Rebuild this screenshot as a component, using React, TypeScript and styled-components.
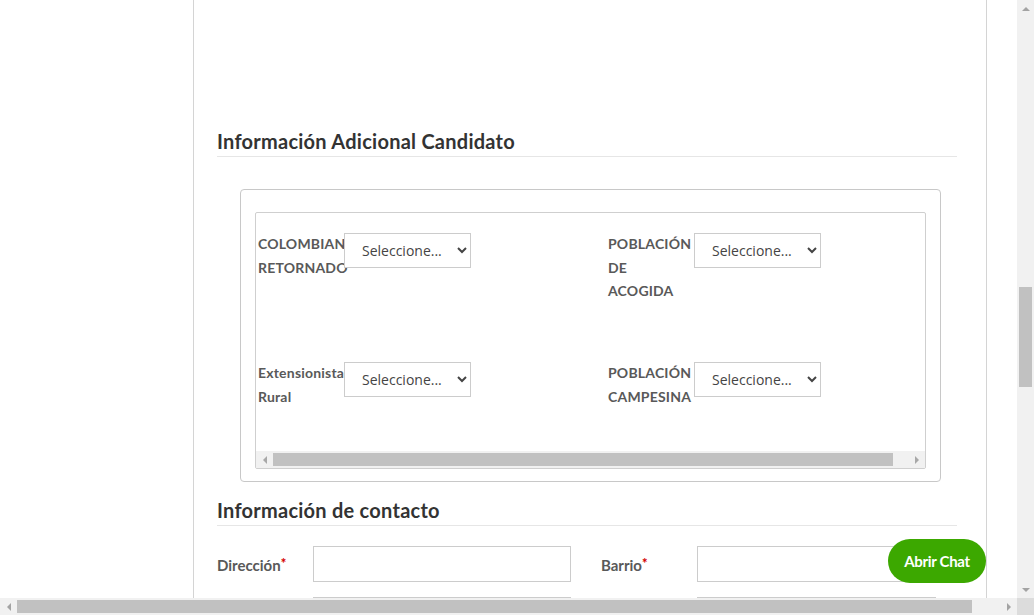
import React from 'react';
import styled, { createGlobalStyle } from 'styled-components';

const GlobalStyle = createGlobalStyle`
  html, body {
    margin: 0;
    padding: 0;
    background: #fff;
    overflow: hidden;
  }
  * { box-sizing: border-box; }
`

const Window = styled.div`
  width: 1034px;
  height: 615px;
  display: flex;
  flex-direction: column;
  font-family: "Open Sans", "Liberation Sans", sans-serif;
  position: relative;
  overflow: hidden;
`

const TopArea = styled.div`
  display: flex;
  height: 598px;
`

const Viewport = styled.div`
  flex: 1;
  overflow: hidden;
`

const Column = styled.div`
  margin-left: 193px;
  width: 794px;
  height: 100%;
  border-left: 1px solid #d4d4d4;
  border-right: 1px solid #d4d4d4;
  padding: 128px 29px 0 23px;
`

const SectionTitle = styled.h2<{ $top?: number }>`
  margin: ${p => p.$top ?? 0}px 0 0;
  font-family: "Lato", "Open Sans", sans-serif;
  font-weight: 700;
  font-size: 20px;
  letter-spacing: 0.25px;
  line-height: 26px;
  color: #333;
  padding-bottom: 2px;
  border-bottom: 1px solid #e6e6e6;
`

const Panel = styled.div`
  margin: 32px 16px 0 23px;
  height: 293px;
  border: 1px solid #c8c8c8;
  border-radius: 4px;
  padding: 22px 14px 0 14px;
`

const ScrollBox = styled.div`
  height: 257px;
  border: 1px solid #cfcfcf;
  border-radius: 2px;
  display: flex;
  flex-direction: column;
  overflow: hidden;
`

const ScrollContent = styled.div`
  flex: 1;
  overflow: hidden;
  padding: 19px 0 0 2px;
`

const FieldRow = styled.div`
  display: grid;
  grid-template-columns: 350px 350px;
  height: 129px;
`

const Field = styled.div`
  display: grid;
  grid-template-columns: 86px 127px;
  align-items: start;
`

const FieldLabel = styled.label`
  font-family: "Lato", "Open Sans", sans-serif;
  font-weight: 700;
  font-size: 14px;
  letter-spacing: 0.2px;
  line-height: 23.5px;
  color: #595959;
  padding-right: 2px;
  white-space: normal;
  overflow: visible;
`

const Select = styled.select`
  position: relative;
  margin-top: 1px;
  width: 127px;
  height: 35px;
  border: 1px solid #cccccc;
  border-radius: 0;
  background: #fff;
  color: #444;
  font-family: "Open Sans", sans-serif;
  font-size: 14px;
  padding: 0 8px 0 13px;
  outline: none;
`

const Track = styled.div<{ $vertical?: boolean; $size: number }>`
  display: flex;
  flex-direction: ${p => (p.$vertical ? 'column' : 'row')};
  background: #f1f1f1;
  ${p => (p.$vertical ? `width: ${p.$size}px;` : `height: ${p.$size}px;`)}
  flex-shrink: 0;
`

const ArrowBox = styled.div<{ $size: number }>`
  width: ${p => p.$size}px;
  height: ${p => p.$size}px;
  display: flex;
  align-items: center;
  justify-content: center;
  flex-shrink: 0;
`

const ThumbArea = styled.div<{ $vertical?: boolean }>`
  flex: 1;
  display: flex;
  flex-direction: ${p => (p.$vertical ? 'column' : 'row')};
  padding: ${p => (p.$vertical ? '0 2px' : '2px 0')};
`

const Thumb = styled.div`
  background: #c1c1c1;
  flex-shrink: 0;
`

const Corner = styled.div`
  width: 17px;
  height: 17px;
  background: #dcdcdc;
`

const BottomArea = styled.div`
  display: flex;
  height: 17px;
`

const BottomBarSlot = styled.div`
  flex: 1;
  display: flex;
  flex-direction: column;
`

const ContactRow = styled.div`
  display: flex;
  align-items: center;
  margin-top: 20px;
`

const ContactField = styled.div<{ $width: number }>`
  display: flex;
  align-items: center;
  width: ${p => p.$width}px;
`

const ContactLabel = styled.span`
  width: 96px;
  font-family: "Lato", "Open Sans", sans-serif;
  font-weight: 700;
  font-size: 15px;
  color: #595959;
  flex-shrink: 0;

  & b {
    color: #d40000;
    font-size: 13px;
    vertical-align: 3px;
  }
`

const TextInput = styled.input<{ $width: number }>`
  width: ${p => p.$width}px;
  height: 36px;
  border: 1px solid #cccccc;
  border-radius: 0;
  background: #fff;
  outline: none;
`

const NextRow = styled.div`
  display: flex;
  margin-top: 15px;
  padding-left: 96px;
  gap: 126px;
`

const ChatButton = styled.button`
  position: absolute;
  left: 888px;
  top: 539px;
  width: 98px;
  height: 44px;
  border: none;
  border-radius: 22px;
  background: #3ca800;
  color: #fff;
  font-family: "Lato", "Open Sans", sans-serif;
  font-weight: 700;
  font-size: 15px;
  letter-spacing: -0.3px;
  cursor: pointer;
`

type Dir = 'up' | 'down' | 'left' | 'right'

const Arrow: React.FC<{ dir: Dir; size: number; color?: string }> = ({ dir, size, color = '#a3a3a3' }) => {
  const pts: Record<Dir, string> = {
    up: '0,5 4,1 8,5',
    down: '0,1 4,5 8,1',
    left: '5,0 1,4 5,8',
    right: '1,0 5,4 1,8',
  }
  const horiz = dir === 'left' || dir === 'right'
  return (
    <ArrowBox $size={size}>
      <svg width={horiz ? 6 : 8} height={horiz ? 8 : 6} viewBox={horiz ? '0 0 6 8' : '0 0 8 6'}>
        <polygon points={pts[dir]} fill={color} />
      </svg>
    </ArrowBox>
  )
}

type BarProps = { vertical?: boolean; size: number; start: number; length: number; arrowColor?: string }

const ScrollBar: React.FC<BarProps> = ({ vertical, size, start, length, arrowColor }) => (
  <Track $vertical={vertical} $size={size}>
    <Arrow dir={vertical ? 'up' : 'left'} size={size} color={arrowColor} />
    <ThumbArea $vertical={vertical}>
      <Thumb
        style={
          vertical
            ? { marginTop: start, height: length, width: '100%' }
            : { marginLeft: start, width: length, height: '100%' }
        }
      />
    </ThumbArea>
    <Arrow dir={vertical ? 'down' : 'right'} size={size} color={arrowColor} />
  </Track>
)

const fields = [
  [
    { label: 'COLOMBIANO RETORNADO' },
    { label: 'POBLACIÓN DE ACOGIDA' },
  ],
  [
    { label: 'Extensionista Rural' },
    { label: 'POBLACIÓN CAMPESINA' },
  ],
]

const App: React.FC = () => {
  return (
    <Window>
      <GlobalStyle />
      <TopArea>
        <Viewport>
          <Column>
            <SectionTitle>Información Adicional Candidato</SectionTitle>
            <Panel>
              <ScrollBox>
                <ScrollContent>
                  {fields.map((row, i) => (
                    <FieldRow key={i}>
                      {row.map(f => (
                        <Field key={f.label}>
                          <FieldLabel>{f.label}</FieldLabel>
                          <Select defaultValue="">
                            <option value="">Seleccione...</option>
                            <option value="si">Sí</option>
                            <option value="no">No</option>
                          </Select>
                        </Field>
                      ))}
                    </FieldRow>
                  ))}
                </ScrollContent>
                <ScrollBar size={17} start={0} length={620} arrowColor="#a8a8a8" />
              </ScrollBox>
            </Panel>
            <SectionTitle $top={15}>Información de contacto</SectionTitle>
            <ContactRow>
              <ContactField $width={384}>
                <ContactLabel>Dirección<b>*</b></ContactLabel>
                <TextInput $width={258} />
              </ContactField>
              <ContactField $width={340}>
                <ContactLabel>Barrio<b>*</b></ContactLabel>
                <TextInput $width={239} />
              </ContactField>
            </ContactRow>
            <NextRow>
              <TextInput $width={258} />
              <TextInput $width={239} />
            </NextRow>
          </Column>
        </Viewport>
        <ScrollBar vertical size={17} start={270} length={100} />
      </TopArea>
      <BottomArea>
        <BottomBarSlot>
          <ScrollBar size={17} start={0} length={955} />
        </BottomBarSlot>
        <Corner />
      </BottomArea>
      <ChatButton>Abrir Chat</ChatButton>
    </Window>
  );
};

export default App;
